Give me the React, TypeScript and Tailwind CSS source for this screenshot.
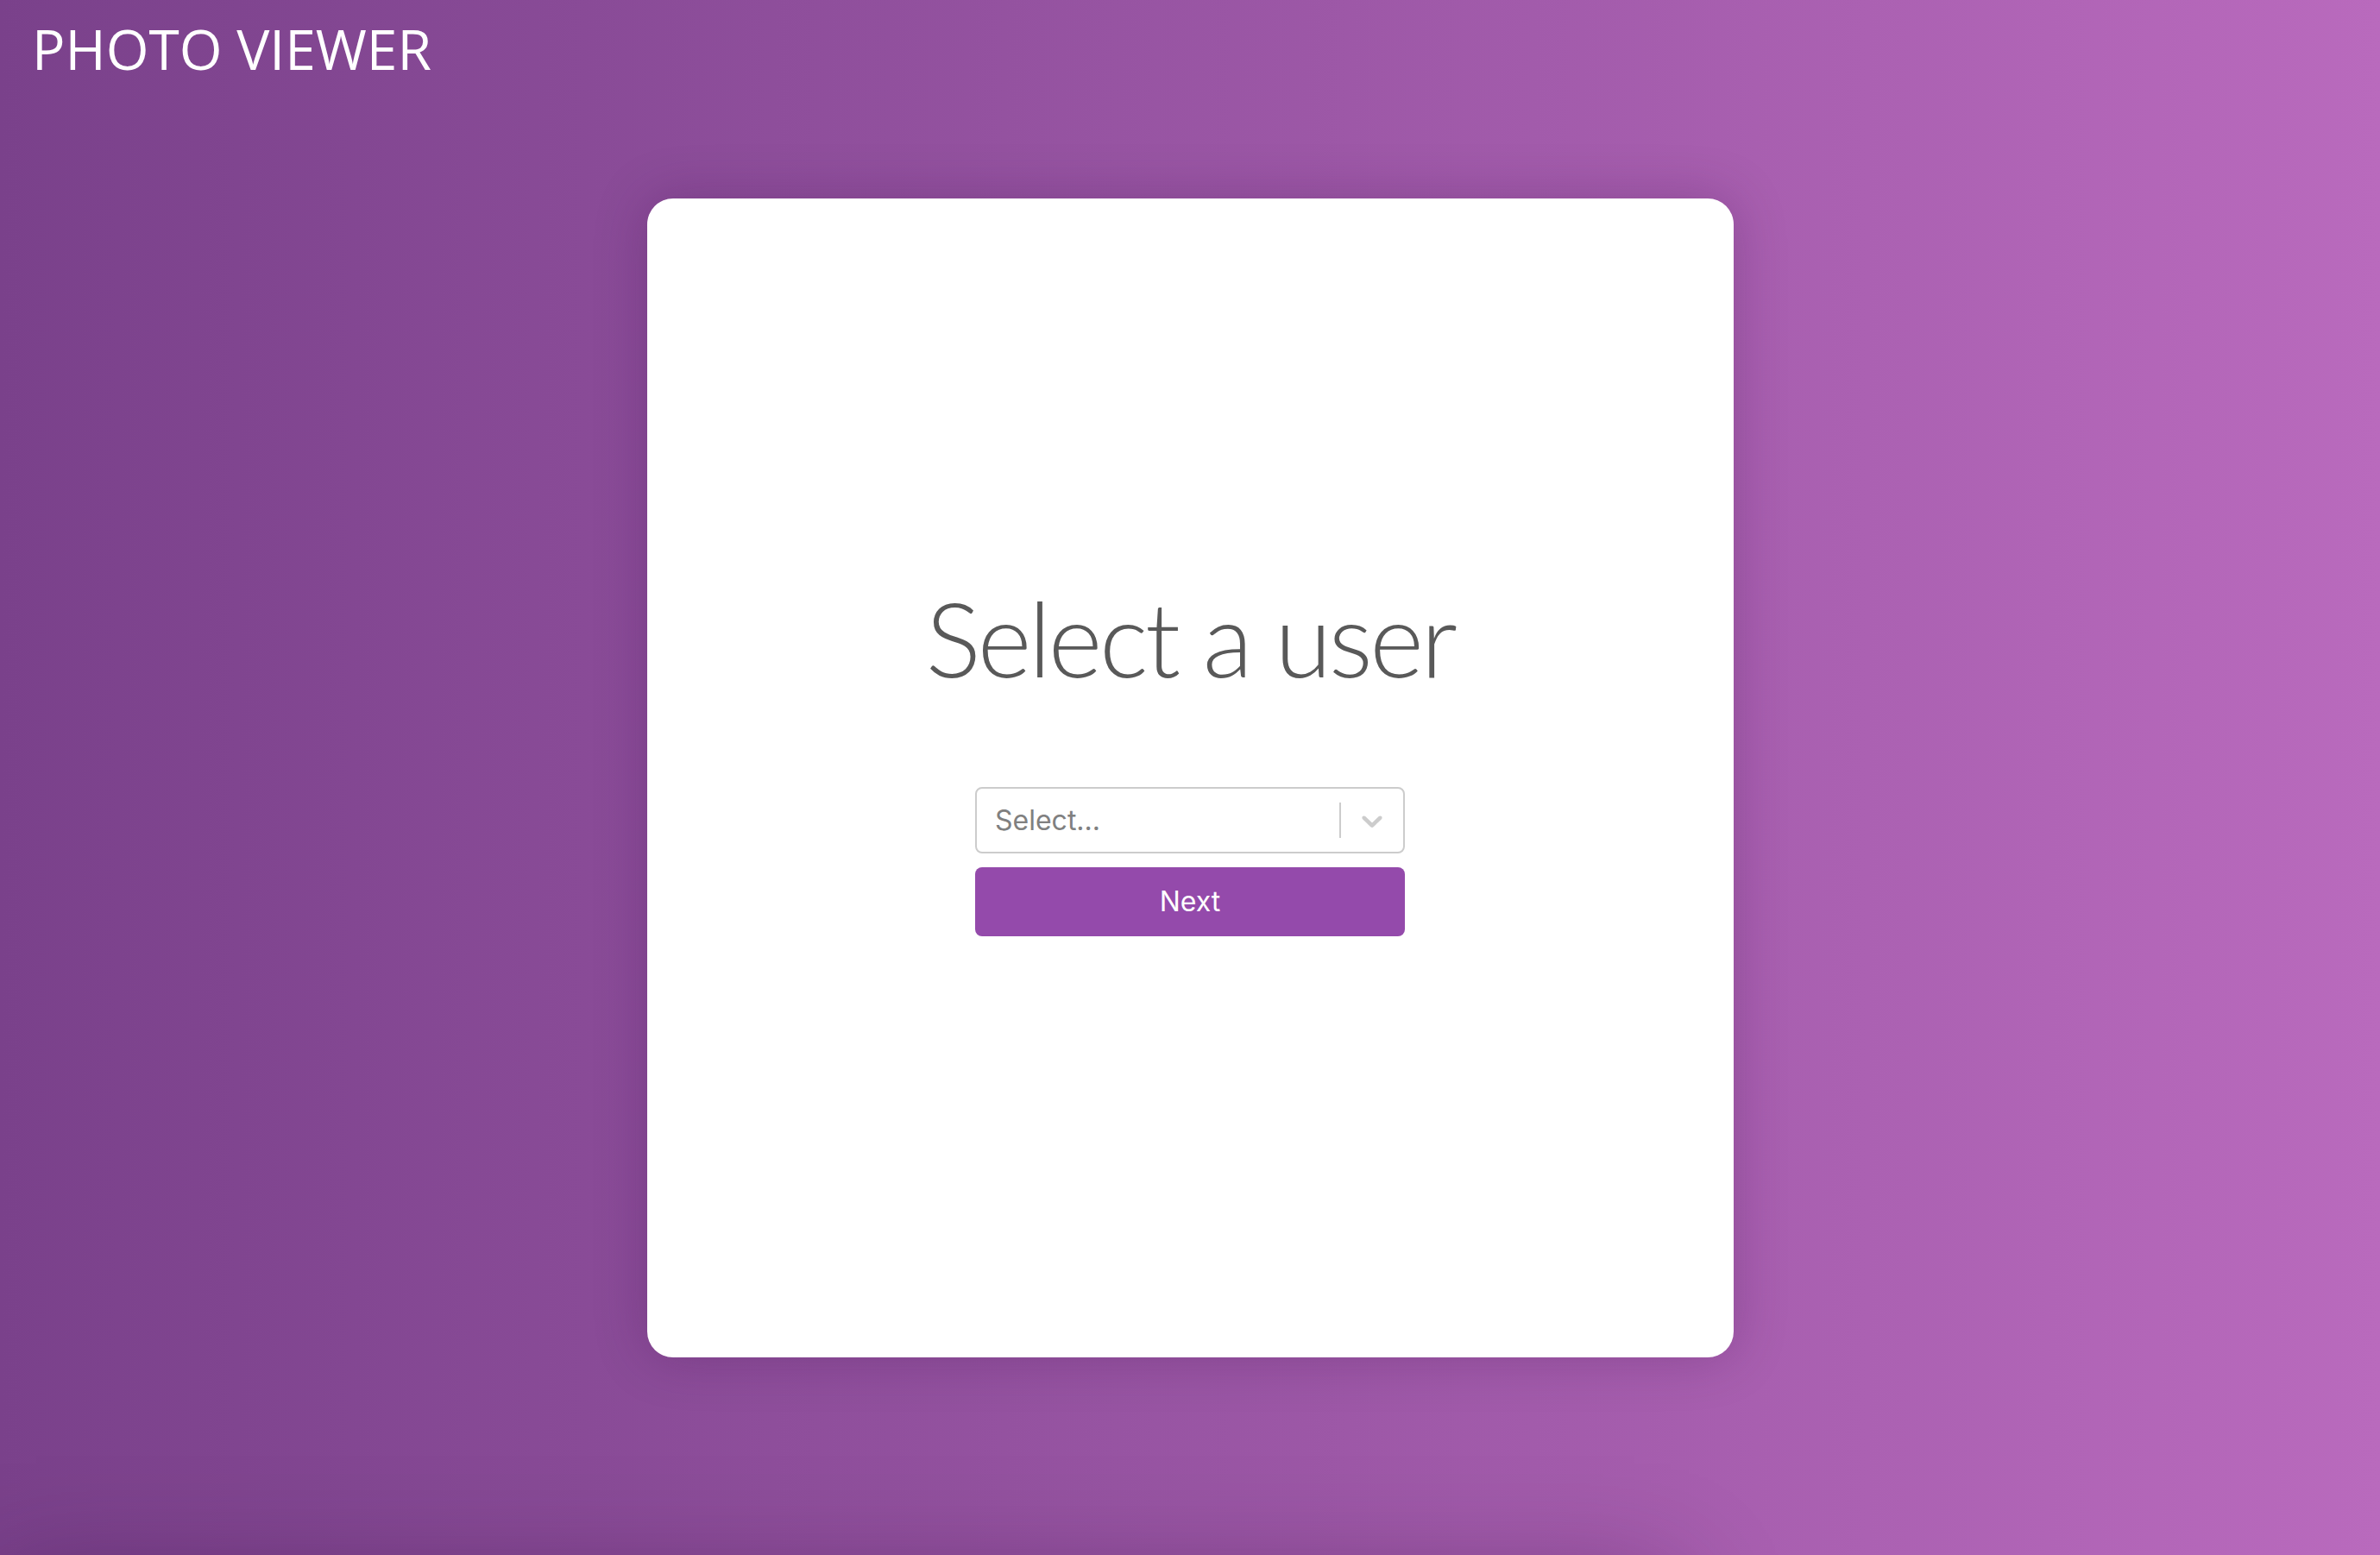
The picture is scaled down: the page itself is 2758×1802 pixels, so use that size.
import { useState } from "react";

export default function App() {
  const [user, setUser] = useState<string>("");

  return (
    <div className="h-screen overflow-hidden bg-gradient-to-r from-[#7a418b] to-[#b96abd]">
      {/* cabecera */}
      <header className="pl-[37px] pt-[25px]">
        <h1 className="text-[64px] leading-none text-white" style={{ fontFamily: '"Open Sans", "Noto Sans", sans-serif' }}>
          PHOTO VIEWER
        </h1>
      </header>

      <main className="flex flex-col items-center mt-[141px]">
        <div className="w-[1259px] h-[1343px] shrink-0 rounded-[30px] bg-white shadow-[0_0_60px_rgba(60,10,70,0.25)] flex flex-col items-center pt-[449px]">
          <h2 className="text-[120px] leading-none font-light text-[#595959] tracking-[-3.5px]" style={{ fontFamily: 'Lato, Roboto, "Liberation Sans", sans-serif' }}>
            Select a user
          </h2>

          <div className="w-[498px] mt-[113px] flex flex-col gap-[16px]" style={{ fontFamily: 'Inter, "Liberation Sans", sans-serif' }}>
            {/* select tipo react-select */}
            <div className="h-[77px] border-2 border-[#cccccc] rounded-[8px] flex items-center cursor-default">
              <div className="flex-1 pl-[21px] text-[32px] text-[#808080]">{user == "" ? "Select..." : user}</div>
              <div className="flex items-center">
                <span className="w-[2px] h-[41px] bg-[#cccccc]" />
                <div className="p-[16px]" onClick={() => setUser("")}>
                  <svg width="40" height="40" viewBox="0 0 20 20" fill="#cccccc">
                    <path d="M4.516 7.548c0.436-0.446 1.043-0.481 1.576 0l3.908 3.747 3.908-3.747c0.533-0.481 1.141-0.446 1.574 0 0.436 0.445 0.408 1.197 0 1.615-0.406 0.418-4.695 4.502-4.695 4.502-0.217 0.223-0.502 0.335-0.787 0.335s-0.57-0.112-0.789-0.335c0 0-4.287-4.084-4.695-4.502s-0.436-1.170 0-1.615z" />
                  </svg>
                </div>
              </div>
            </div>

            <button className="h-[80px] rounded-[8px] bg-[#944aab] text-white text-[32px]">Next</button>
          </div>
        </div>

        {/* siguiente bloque, fuera de la pantalla */}
        <div className="w-[1936px] h-[400px] shrink-0 -ml-[822px] mt-[260px] bg-[#7a418b] shadow-[0_0_120px_rgba(40,0,50,0.35)]" />
      </main>
    </div>
  );
}
